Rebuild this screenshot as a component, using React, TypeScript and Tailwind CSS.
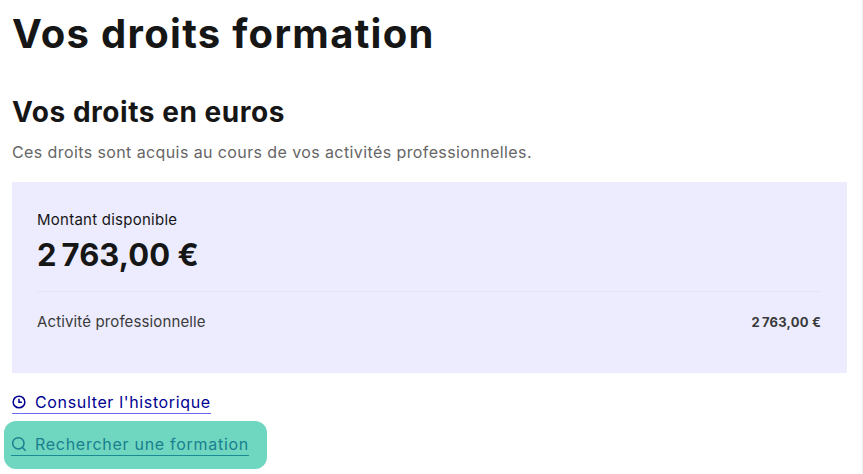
import React from "react";

const App = () => {
  return (
    <div className="h-[474px] w-[863px] overflow-hidden border-r border-[#f0f0f0] bg-white font-['Inter',sans-serif]">
      <div className="w-[847px] pl-3">
        {/* Page title */}
        <h1 className="pt-[8px] text-[40px] leading-[52px] font-bold tracking-[1.3px] text-[#161616]">
          Vos droits formation
        </h1>
        <h2 className="mt-[34px] text-[28px] leading-[36px] font-bold tracking-[0.55px] text-[#161616]">
          Vos droits en euros
        </h2>
        <p className="mt-[10px] text-[16px] leading-[24px] tracking-[0.4px] text-[#666666]">
          Ces droits sont acquis au cours de vos activités professionnelles.
        </p>

        {/* Amount card */}
        <div className="mt-[18px] h-[191px] bg-[#ececfe] pt-[28px] pr-[26px] pl-[25px]">
          <div className="text-[15px] leading-[20px] tracking-[0.25px] text-[#161616]">Montant disponible</div>
          <div className="mt-[3px] flex gap-[5px] text-[31px] leading-[44px] font-bold tracking-[0.05px] text-[#161616]">
            <span>2</span>
            <span>763,00 €</span>
          </div>
          <div className="mt-[14px] border-t border-[#e5e5f4]" />
          <div className="mt-[20px] flex items-center justify-between text-[#3a3a3a]">
            <span className="text-[15px] leading-[20px] tracking-[0.13px]">Activité professionnelle</span>
            <span className="flex gap-[2px] text-[13px] leading-[20px] font-bold tracking-[0.2px]">
              <span>2</span>
              <span>763,00 €</span>
            </span>
          </div>
        </div>
      </div>

      {/* Links */}
      <div className="pl-3">
        <a className="mt-[18px] flex w-fit items-center gap-[9px] border-b border-[#6a6af4] text-[#000091]">
          <svg width="14" height="14" viewBox="0 0 24 24" fill="none" stroke="currentColor" strokeWidth="2.6">
            <circle cx="12" cy="12" r="10" />
            <path d="M12 6.5V12.5H17" />
          </svg>
          <span className="text-[16px] leading-[22px] tracking-[0.65px]">Consulter l'historique</span>
        </a>
      </div>
      <div className="mt-[7px] ml-[4px] flex h-[48px] w-[263px] items-start rounded-[12px] bg-[#6fd6bf] pt-[12px] pl-[7px]">
        <a className="flex items-center gap-[8px] border-b border-[#1a8a95] text-[#1a7f8f]">
          <svg width="16" height="16" viewBox="0 0 24 24" fill="none" stroke="currentColor" strokeWidth="2.2">
            <circle cx="11" cy="11" r="8.5" />
            <path d="M17.5 17.5L22 22" />
          </svg>
          <span className="text-[16px] leading-[22px] tracking-[0.72px]">Rechercher une formation</span>
        </a>
      </div>
    </div>
  );
};

export default App;
